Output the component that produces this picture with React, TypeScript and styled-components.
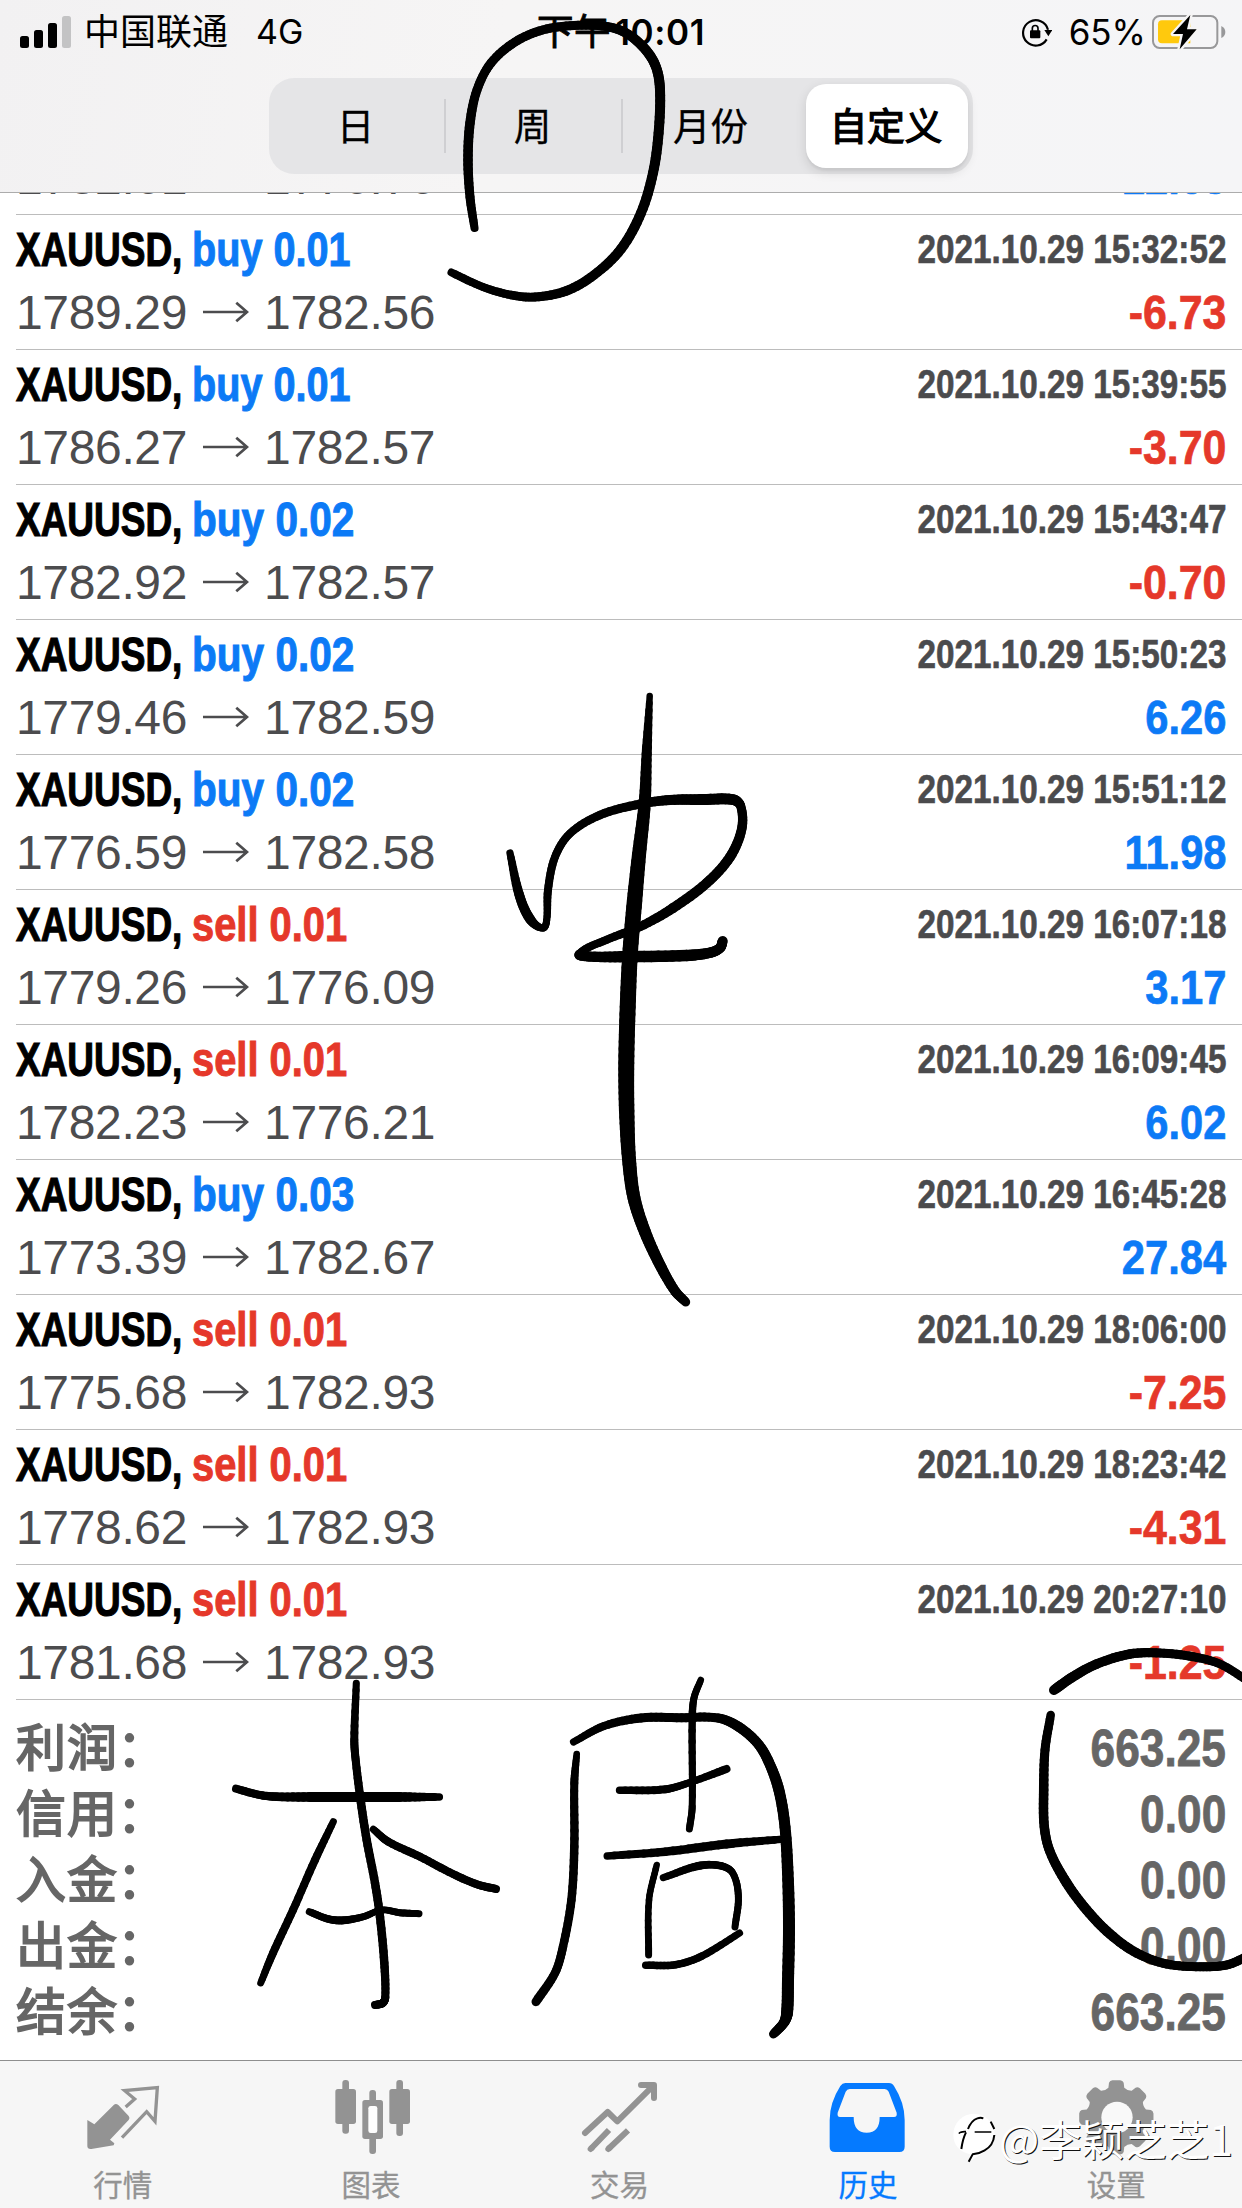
import React from "react";
import styled, { createGlobalStyle } from "styled-components";

const latin = `"Liberation Sans", "Noto Sans CJK SC", sans-serif`;
const system = `Inter, "Noto Sans CJK SC", sans-serif`;
const cjk = `"Noto Sans CJK SC", sans-serif`;

const blue = "#0c7af6";
const red = "#e5382a";

const GlobalStyle = createGlobalStyle`
  body { margin: 0; background: #fff; }
  * { box-sizing: border-box; }
`;

const Screen = styled.div`
  position: relative;
  width: 1242px;
  height: 2208px;
  display: flex;
  flex-direction: column;
  overflow: hidden;
  background: #fff;
  font-family: ${latin};
  white-space: nowrap;
`;

const Header = styled.header`
  height: 193px;
  flex: none;
  border-bottom: 1px solid #acacac;
  background: linear-gradient(100deg, #f2f1f2 0%, #f6f5f5 40%, #f5f5f7 100%);
`;

const StatusBar = styled.div`
  height: 60px;
  padding: 3px 16px 0 20px;
  display: grid;
  grid-template-columns: 1fr auto 1fr;
  align-items: center;
  font-family: ${system};
  font-size: 34px;
  color: #000;
`;

const Carrier = styled.div`
  display: flex;
  align-items: center;
  gap: 13px;
`;

const CarrierName = styled.span`
  font-size: 36px;
  line-height: 54px;
  margin-right: 15px;
`;

const Clock = styled.div`
  display: flex;
  align-items: center;
  gap: 4px;
  margin-left: -4px;
  font-weight: 600;
  font-size: 35px;
  line-height: 54px;
  letter-spacing: 0.6px;
`;

const ClockPeriod = styled.span`
  font-weight: 400;
  font-size: 36.5px;
  -webkit-text-stroke: 0.9px #000;
`;

const Power = styled.div`
  display: flex;
  align-items: center;
  justify-content: flex-end;
  gap: 8px;
`;

const Percent = styled.span`
  margin-left: 9px;
  margin-right: -2px;
  font-size: 35px;
  line-height: 54px;
`;

const Segments = styled.div`
  width: 704px;
  height: 96px;
  margin: 18px auto 0;
  padding: 6px 5px 6px 0;
  display: grid;
  grid-template-columns: 175px 2px 175px 2px 183px 162px;
  align-items: center;
  border-radius: 25px;
  background: #e5e5e7;
`;

const Segment = styled.div<{ $active?: boolean; $shift?: number }>`
  height: 84px;
  display: flex;
  align-items: center;
  justify-content: center;
  padding-bottom: 5px;
  padding-right: ${(p) => p.$shift ?? 2}px;
  border-radius: 20px;
  font-family: ${cjk};
  font-size: 37.5px;
  -webkit-text-stroke: ${(p) => (p.$active ? "1.300px #000" : "0.3px #000")};
  background: ${(p) => (p.$active ? "#fff" : "transparent")};
  box-shadow: ${(p) => (p.$active ? "0 4px 12px rgba(0,0,0,.12), 0 3px 2px rgba(0,0,0,.04)" : "none")};
`;

const Divider = styled.div`
  height: 54px;
  background: #cfcfd2;
`;

const CutOff = styled.div`
  height: 22px;
  flex: none;
  margin-left: 16px;
  padding: 0 16px 6px 0;
  overflow: hidden;
  display: flex;
  flex-direction: column;
  justify-content: flex-end;
  border-bottom: 1px solid #bcbcbc;
`;

const DealRow = styled.div`
  height: 135px;
  flex: none;
  margin-left: 16px;
  padding: 2px 16px 0 0;
  border-bottom: 1px solid #bcbcbc;
`;

const Line = styled.div<{ $h: number }>`
  height: ${(p) => p.$h}px;
  flex: none;
  display: flex;
  align-items: center;
`;

const Squeezed = styled.span<{ $x: number; $right?: boolean; $bold?: number }>`
  display: inline-block;
  transform: scaleX(${(p) => p.$x});
  transform-origin: ${(p) => (p.$right ? "right" : "left")} center;
  -webkit-text-stroke: ${(p) => p.$bold ?? 1}px currentColor;
`;

const Symbol = styled.div`
  width: 176px;
  font-size: 48px;
  font-weight: 700;
  color: #000;
`;

const Side = styled.div<{ $c: string }>`
  flex: 1;
  font-size: 48px;
  font-weight: 700;
  color: ${(p) => p.$c};
`;

const DateTime = styled.div`
  font-size: 40px;
  font-weight: 700;
  color: #4b4b4d;
`;

const Prices = styled.div`
  flex: 1;
  display: flex;
  align-items: center;
  font-size: 48px;
  letter-spacing: -0.35px;
  color: #4c4c4e;
  svg { margin: 0 15px 0 15px; }
`;

const Profit = styled.div<{ $c: string }>`
  font-size: 48px;
  font-weight: 700;
  color: ${(p) => p.$c};
`;

const Summary = styled.section`
  flex: 1;
  padding: 15px 16px 0;
`;

const SummaryRow = styled.div`
  height: 66px;
  display: flex;
  align-items: center;
  justify-content: space-between;
  color: #666;
  font-weight: 700;
`;

const SummaryLabel = styled.span`
  display: flex;
  align-items: center;
  height: 66px;
  padding-bottom: 8px;
  font-family: ${cjk};
  font-weight: 400;
  font-size: 50px;
  line-height: 58px;
  letter-spacing: 1px;
  -webkit-text-stroke: 1.8px #666;
`;

const Colon = styled.span`
  margin-left: -1px;
`;

const SummaryValue = styled.span`
  font-size: 51px;
`;

const TabBar = styled.nav`
  height: 148px;
  flex: none;
  display: grid;
  grid-template-columns: repeat(5, 1fr);
  border-top: 1px solid #8e8e8e;
  background: #f6f6f6;
`;

const Tab = styled.div<{ $active?: boolean }>`
  display: flex;
  flex-direction: column;
  align-items: center;
  padding-top: 15px;
  color: ${(p) => (p.$active ? "#057aff" : "#939393")};
  font-family: ${cjk};
  font-size: 29.5px;
  line-height: 44px;
  -webkit-text-stroke: 0.3px currentColor;
  svg { flex: none; margin-bottom: 5px; }
`;

const TabLabel = styled.span`
  padding-right: 3px;
`;

const InkLayer = styled.svg`
  position: absolute;
  inset: 0;
  pointer-events: none;
`;

const Watermark = styled.div`
  position: absolute;
  left: 952px;
  top: 2108px;
  height: 60px;
  display: flex;
  align-items: center;
  gap: 3px;
  font-family: ${cjk};
  font-size: 42.5px;
  line-height: 60px;
  color: #fff;
  text-shadow: 1px 1px 0.5px #111;
`;

type Deal = [string, string, string, string, string, string];

const deals: Deal[] = [
  ["buy", "0.01", "2021.10.29 15:32:52", "1789.29", "1782.56", "-6.73"],
  ["buy", "0.01", "2021.10.29 15:39:55", "1786.27", "1782.57", "-3.70"],
  ["buy", "0.02", "2021.10.29 15:43:47", "1782.92", "1782.57", "-0.70"],
  ["buy", "0.02", "2021.10.29 15:50:23", "1779.46", "1782.59", "6.26"],
  ["buy", "0.02", "2021.10.29 15:51:12", "1776.59", "1782.58", "11.98"],
  ["sell", "0.01", "2021.10.29 16:07:18", "1779.26", "1776.09", "3.17"],
  ["sell", "0.01", "2021.10.29 16:09:45", "1782.23", "1776.21", "6.02"],
  ["buy", "0.03", "2021.10.29 16:45:28", "1773.39", "1782.67", "27.84"],
  ["sell", "0.01", "2021.10.29 18:06:00", "1775.68", "1782.93", "-7.25"],
  ["sell", "0.01", "2021.10.29 18:23:42", "1778.62", "1782.93", "-4.31"],
  ["sell", "0.01", "2021.10.29 20:27:10", "1781.68", "1782.93", "-1.25"],
];

const totals = [
  ["利润", "663.25"],
  ["信用", "0.00"],
  ["入金", "0.00"],
  ["出金", "0.00"],
  ["结余", "663.25"],
];

const Arrow = () => (
  <svg width="47" height="22" viewBox="0 0 48 22" fill="none" stroke="#4c4c4e" strokeWidth="2.8">
    <path d="M1 11H46M35 1.500L46 11L35 20.500" strokeLinejoin="miter" />
  </svg>
);

function PriceLine({ open, close, profit }: { open: string; close: string; profit: string }) {
  const loss = profit.startsWith("-");
  return (
    <Line $h={62}>
      <Prices>
        {open}
        <Arrow />
        {close}
      </Prices>
      <Profit $c={loss ? red : blue}>
        <Squeezed $x={loss ? 0.893 : 0.868} $right $bold={0.7}>
          {profit}
        </Squeezed>
      </Profit>
    </Line>
  );
}

function DealItem({ deal }: { deal: Deal }) {
  const [side, lots, time, open, close, profit] = deal;
  return (
    <DealRow>
      <Line $h={64}>
        <Symbol>
          <Squeezed $x={0.77} $bold={1.2}>XAUUSD,</Squeezed>
        </Symbol>
        <Side $c={side === "buy" ? blue : red}>
          <Squeezed $x={side === "buy" ? (lots === "0.01" ? 0.825 : 0.845) : 0.83}>
            {side} {lots}
          </Squeezed>
        </Side>
        <DateTime>
          <Squeezed $x={0.832} $right $bold={0.6}>
            {time}
          </Squeezed>
        </DateTime>
      </Line>
      <PriceLine open={open} close={close} profit={profit} />
    </DealRow>
  );
}

const Signal = () => (
  <svg width="51" height="32" viewBox="0 0 51 32">
    <rect x="0" y="20" width="9" height="12" rx="2.5" />
    <rect x="14" y="14" width="9" height="18" rx="2.5" />
    <rect x="28" y="7" width="9" height="25" rx="2.5" />
    <rect x="42" y="0" width="9" height="32" rx="2.5" fill="#c3c3c4" />
  </svg>
);

const RotationLock = () => (
  <svg width="32" height="30" viewBox="120 50 96 90" fill="none" stroke="#000" strokeWidth="6.5">
    <path d="M200 117A38 38 0 1 1 204 88" />
    <path d="M193 89H217L205 108Z" fill="#000" stroke="none" />
    <rect x="150" y="90" width="31" height="24" rx="3" fill="#000" stroke="none" />
    <path d="M157 92V84a8.500 8.500 0 0 1 17 0V92" strokeWidth="5" />
  </svg>
);

const Battery = () => (
  <svg width="74" height="36" viewBox="519 36 222 108">
    <rect x="522" y="42" width="193" height="96" rx="20" fill="none" stroke="#98989a" strokeWidth="6" />
    <path d="M549 55H634V124H549Q537 124 537 112V67Q537 55 549 55Z" fill="#ffc90d" />
    <path d="M727 72Q739 78 739 90T727 108Z" fill="#98989a" />
    <path
      d="M634 39L582 96H612L602 142L653 82H624Z"
      fill="#000"
      stroke="#f6f5f5"
      strokeWidth="14"
      paintOrder="stroke"
      strokeLinejoin="round"
    />
  </svg>
);

const QuotesIcon = () => (
  <svg width="80" height="80" viewBox="72 48 240 240" fill="currentColor">
    <path d="M82 180L103 193L162 134Q168 130 175 135L206 168Q211 174 206 180L150 239L163 250L161 256L94 267Q82 268 82 258Z" />
    <path
      d="M197 141L224 117L194 92L292 83L285 184L260 155L186 233"
      fill="none"
      stroke="currentColor"
      strokeWidth="10"
    />
  </svg>
);

const ChartIcon = () => (
  <svg width="80" height="80" viewBox="818 48 240 240" fill="currentColor">
    <rect x="846" y="60" width="20" height="161" rx="9" />
    <rect x="825" y="87" width="62" height="105" rx="8" />
    <rect x="1008" y="60" width="20" height="168" rx="9" />
    <rect x="987" y="87" width="62" height="105" rx="8" />
    <rect x="927" y="90" width="20" height="192" rx="9" />
    <rect x="906" y="120" width="62" height="117" rx="8" />
    <rect x="924" y="138" width="27" height="81" rx="7" fill="#fdfdfd" />
  </svg>
);

const TradeIcon = () => (
  <svg
    width="80"
    height="80"
    viewBox="63 48 240 240"
    fill="none"
    stroke="currentColor"
    strokeWidth="18"
    strokeLinecap="round"
    strokeLinejoin="round"
  >
    <path d="M75 219L143 156L172 184L280 77M243 75H282V114" />
    <path d="M92 267L147 210M145 267L204 211" strokeLinecap="butt" />
    <path d="M92 267L95 264M145 267L148 264" />
  </svg>
);

const HistoryIcon = () => (
  <svg width="80" height="80" viewBox="808 48 240 240" fill="currentColor">
    <path
      fillRule="evenodd"
      d="M857 69H988Q998 69 1003 78Q1035 128 1035 180V260Q1035 276 1019 276H826Q810 276 810 260V180Q810 128 842 78Q848 69 857 69ZM870 87Q862 87 858 95L834 158Q832 171 841 171H882Q882 218 921 218T960 171H1003Q1013 171 1011 158L987 95Q983 87 975 87Z"
    />
  </svg>
);

const gearPath = (() => {
  const parts: string[] = [];
  const at = (r: number, deg: number) => {
    const a = ((deg - 90) * Math.PI) / 180;
    return `${(528 + r * Math.cos(a)).toFixed(1)} ${(172 + r * Math.sin(a)).toFixed(1)}`;
  };
  for (let i = 0; i < 8; i++) {
    const c = i * 45;
    parts.push(`${i ? "L" : "M"}${at(92, c - 15)}`);
    parts.push(`L${at(106, c - 12)}Q${at(112, c - 10)} ${at(112, c - 6)}`);
    parts.push(`L${at(112, c + 6)}Q${at(112, c + 10)} ${at(106, c + 12)}`);
    parts.push(`L${at(92, c + 15)}Q${at(86, c + 22.5)} ${at(92, c + 30)}`);
  }
  return parts.join("") + "Z";
})();

const SettingsIcon = () => (
  <svg width="80" height="80" viewBox="413 48 240 240">
    <path d={gearPath} fill="currentColor" />
    <circle cx="530" cy="172" r="47" fill="#f9f9f9" />
  </svg>
);

const WatermarkLogo = () => (
  <svg width="44" height="50" viewBox="36 174 132 150" fill="none">
    <path d="M102 176a62 62 0 0 1 62 62q0 34-30 54q-22 14-48 28l4-22Q40 286 40 238A62 62 0 0 1 102 176Z" fill="#fff" />
    <path d="M64 282Q68 252 78 232" stroke="#000" strokeWidth="6" />
    <path d="M84 222Q94 196 112 190Q122 187 130 190" stroke="#000" strokeWidth="6" />
    <path d="M57 236Q60 229 78 230M104 231H154" stroke="#000" strokeWidth="5" />
    <path d="M152 200L163 222M163 240Q160 272 134 286Q118 296 98 298L86 320" stroke="#000" strokeWidth="6" />
  </svg>
);

type Pt = [number, number, number];

const strokes: Pt[][] = [
  [[474.5, 228, 8], [470, 197, 9], [468, 160, 9.5], [470, 123, 9.5], [477, 90, 9], [491, 63, 9], [515, 42, 9], [542.5, 30, 9], [574, 25.5, 9], [606, 26.5, 9], [626, 33, 9.5], [645, 49, 10], [656, 67, 10], [660, 90, 10], [658.6, 133, 10], [653, 173, 10], [641, 213, 10], [621, 249, 10], [594, 275, 9.5], [566, 291, 9.5], [535, 297, 9], [511, 295, 8.5], [483, 287, 8], [451.5, 272.5, 8]],
  [[649.7, 696, 6], [646.7, 754, 10], [644.7, 803, 12], [639, 855, 14], [634, 907, 15.5], [630, 955, 15.5], [627.7, 1007, 16], [626.3, 1063, 16], [626.7, 1111, 15.5], [629, 1159, 14], [634, 1198, 13], [645, 1232, 12], [660, 1265, 11], [675, 1291, 10], [685.7, 1302, 9]],
  [[510, 853, 7], [519, 894, 9.5], [530, 919, 10], [542.7, 928, 7], [546.7, 920, 7], [548, 890, 8], [555, 857, 8], [570, 833.5, 8], [600, 815, 8.5], [640, 804, 9], [670, 800, 10], [703, 799.6, 11], [733, 799.6, 11], [740.7, 806, 9], [741.7, 829, 9.5], [730, 857, 10], [706.7, 883, 10], [673, 908, 10], [640, 926.7, 9], [606.7, 939.7, 8], [579, 954, 8], [590, 956.6, 10], [630, 956.6, 11.5], [686.7, 955.5, 11.5], [710, 952.7, 10.5], [720, 948, 10], [722.7, 941, 10]],
  [[356.3, 1683.3, 7], [354.3, 1740, 8], [356, 1763, 8], [361, 1803, 8.5], [366.7, 1840, 8.5], [375, 1883, 8.5], [380, 1917, 8.5], [384.3, 1963, 8.5], [385.3, 1997, 8], [382.7, 2003, 8], [375, 2005, 8]],
  [[236, 1788.7, 8], [260, 1795, 8], [276.7, 1796.7, 8.5], [320, 1797, 10], [400, 1797, 10], [439.3, 1797, 7.5]],
  [[333.3, 1821.7, 7], [315, 1860, 8], [293, 1910, 8], [273, 1953, 8], [260.7, 1983, 7]],
  [[309.3, 1911.7, 7], [328.3, 1919, 7.5], [343.3, 1920.3, 8], [363.3, 1916.7, 7], [381.7, 1910, 6.5], [400, 1912.7, 7], [419, 1913.7, 7]],
  [[373.3, 1829.3, 7], [388.3, 1841.7, 8], [420, 1856.7, 8], [453, 1874, 8], [477.5, 1884.5, 8], [496, 1889, 8]],
  [[576.7, 1754, 6.5], [574.3, 1783, 8], [574.3, 1846.7, 8.5], [571.4, 1900, 8.5], [563, 1946.7, 8.5], [555, 1973, 8.5], [536, 2001.7, 9]],
  [[573.5, 1742, 7], [604, 1726, 8], [641, 1718, 9], [681.6, 1717.7, 9], [718, 1718, 9], [739, 1727, 10], [759, 1745, 10], [771.4, 1768, 10.5], [779.6, 1793, 11], [785, 1827, 11], [787.8, 1873, 11.5], [789, 1927, 12], [788, 1980, 12], [787, 2013, 12], [783.7, 2023, 10], [773.5, 2034, 9]],
  [[700.8, 1680, 6.5], [694, 1698, 7], [692.2, 1720, 7.5], [692.2, 1806.7, 7], [689.4, 1829, 7]],
  [[619.6, 1790.3, 7.5], [665.3, 1789.3, 8], [692, 1781.7, 7], [726.5, 1769, 8]],
  [[607.3, 1856, 7.5], [665.3, 1851.7, 8.5], [726.5, 1844, 9], [781.6, 1839.3, 7.5]],
  [[656.7, 1865, 6.5], [649, 1900, 6.5], [648.6, 1955, 7]],
  [[663.3, 1877.7, 7], [698, 1866, 8], [720.4, 1865.7, 7.5], [732.7, 1873, 7], [738.4, 1896.7, 7], [735, 1927, 7]],
  [[645.7, 1965.3, 7.5], [675.5, 1964.7, 7.5], [702, 1956, 7.5], [739.6, 1933, 7]],
  [[1054, 1690, 10], [1073, 1676.7, 10], [1096.7, 1664, 9.5], [1130, 1654, 9.5], [1160, 1653, 9], [1193, 1656.7, 9], [1220, 1664, 8.5], [1246.7, 1680, 8.5]],
  [[1050.7, 1715, 8.5], [1045, 1750, 9], [1043.7, 1790, 9.5], [1044.3, 1826.7, 9.5], [1050, 1851.7, 9.5], [1066.7, 1883, 10], [1086.7, 1910, 10], [1110, 1934, 10], [1136.7, 1953, 9.5], [1166.7, 1964, 9], [1200, 1966.7, 9], [1226.7, 1965, 9], [1246.7, 1956.7, 9]],
];

/* Smooth spline through the pen samples, with the pressure interpolated along the way. */
function samplePen(points: Pt[]): Pt[] {
  const out: Pt[] = [];
  const steps = 8;
  for (let i = 0; i < points.length - 1; i++) {
    const b = points[i];
    const c = points[i + 1];
    const a = points[i - 1] ?? b;
    const d = points[i + 2] ?? c;
    const len = Math.hypot(c[0] - b[0], c[1] - b[1]);
    const before = Math.hypot(c[0] - a[0], c[1] - a[1]) || 1;
    const after = Math.hypot(d[0] - b[0], d[1] - b[1]) || 1;
    for (let s = 0; s < steps; s++) {
      const t = s / steps;
      const t2 = t * t;
      const t3 = t2 * t;
      const mix = (k: 0 | 1) => {
        const m0 = ((c[k] - a[k]) / before) * len;
        const m1 = ((d[k] - b[k]) / after) * len;
        return (2 * t3 - 3 * t2 + 1) * b[k] + (t3 - 2 * t2 + t) * m0 + (3 * t2 - 2 * t3) * c[k] + (t3 - t2) * m1;
      };
      out.push([mix(0), mix(1), b[2] + (c[2] - b[2]) * t]);
    }
  }
  out.push(points[points.length - 1]);
  return out;
}

const Ink = () => (
  <InkLayer width="1242" height="2208" viewBox="0 0 1242 2208" stroke="#000" strokeLinecap="round">
    {strokes.map((stroke, i) => {
      const pen = samplePen(stroke);
      return (
        <g key={i}>
          {pen.slice(1).map((p, j) => (
            <line key={j} x1={pen[j][0]} y1={pen[j][1]} x2={p[0]} y2={p[1]} strokeWidth={p[2]} />
          ))}
        </g>
      );
    })}
  </InkLayer>
);

const tabs = [
  { label: "行情", icon: <QuotesIcon /> },
  { label: "图表", icon: <ChartIcon /> },
  { label: "交易", icon: <TradeIcon /> },
  { label: "历史", icon: <HistoryIcon />, active: true },
  { label: "设置", icon: <SettingsIcon /> },
];

export default function App() {
  return (
    <Screen>
      <GlobalStyle />
      <Header>
        <StatusBar>
          <Carrier>
            <Signal />
            <CarrierName>中国联通</CarrierName>
            <span>4G</span>
          </Carrier>
          <Clock>
            <ClockPeriod>下午</ClockPeriod>
            <span>10:01</span>
          </Clock>
          <Power>
            <RotationLock />
            <Percent>65%</Percent>
            <Battery />
          </Power>
        </StatusBar>
        <Segments>
          <Segment>日</Segment>
          <Divider />
          <Segment>周</Segment>
          <Divider />
          <Segment $shift={8}>月份</Segment>
          <Segment $active>自定义</Segment>
        </Segments>
      </Header>

      <CutOff>
        <PriceLine open="1782.61" close="1776.76" profit="12.63" />
      </CutOff>
      {deals.map((deal) => (
        <DealItem key={deal[2]} deal={deal} />
      ))}

      <Summary>
        {totals.map(([label, value]) => (
          <SummaryRow key={label}>
            <SummaryLabel>
              {label}
              <Colon>：</Colon>
            </SummaryLabel>
            <SummaryValue>
              <Squeezed $x={0.868} $right $bold={0.8}>
                {value}
              </Squeezed>
            </SummaryValue>
          </SummaryRow>
        ))}
      </Summary>

      <TabBar>
        {tabs.map((tab) => (
          <Tab key={tab.label} $active={tab.active}>
            {tab.icon}
            <TabLabel>{tab.label}</TabLabel>
          </Tab>
        ))}
      </TabBar>

      <Ink />
      <Watermark>
        <WatermarkLogo />
        <span>@李颖芝芝1</span>
      </Watermark>
    </Screen>
  );
}
